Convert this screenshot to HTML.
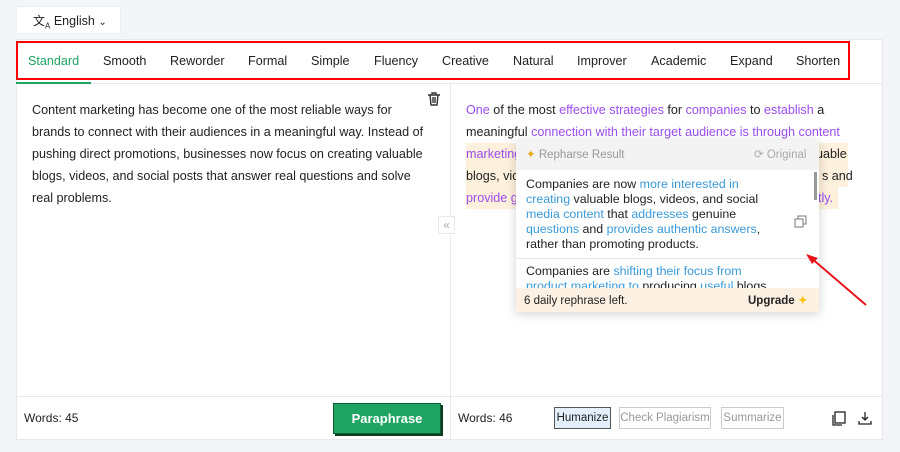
<!DOCTYPE html>
<html><head><meta charset="utf-8"><style>
*{box-sizing:border-box;margin:0;padding:0}
body{width:900px;height:452px;background:#f3f5f9;font-family:"Liberation Sans",Arial,sans-serif;position:relative;overflow:hidden;color:#222}
.abs{position:absolute}
.lang{left:16px;top:6px;width:105px;height:28px;background:#fff;font-size:12.5px;line-height:28px;padding-left:16px;border:1px solid #eceef2}
.main{left:16px;top:39px;width:867px;height:401px;background:#fff;border:1px solid #e6e8ec}
.tabs{left:16px;top:41px;width:834px;height:39px;border:2px solid #f00}
.tab{position:absolute;top:54px;font-size:12.6px;color:#222}
.ln{position:absolute;font-size:12.6px;line-height:22px;white-space:nowrap}
.p{color:#9b4dee}
.b{color:#3a9ad9}
.hl{background:#fdf0dc}
.pop{left:516px;top:140px;width:303px;height:172px;background:#fff;box-shadow:0 2px 10px rgba(0,0,0,.18);overflow:hidden}
.pl{position:absolute;left:10px;font-size:12.4px;line-height:15px;white-space:nowrap;color:#222}
.btn{position:absolute;top:407px;height:22px;font-size:11.5px;line-height:21px;padding:0;border:1px solid #ccc;color:#999;white-space:nowrap;text-align:center;overflow:hidden}
</style></head><body>
<div class="abs lang"><span style="font-size:12px">文<sub style="font-size:8px">A</sub></span> English <span style="font-size:10px">⌄</span></div>
<div class="abs main"></div>
<div class="abs" style="left:16px;top:83px;width:867px;height:1px;background:#e6e8ec"></div>
<div class="abs" style="left:16px;top:82px;width:75px;height:2px;background:#1fa463"></div>
<div class="abs tabs"></div>
<span class="tab" style="left:28px;color:#1fa463">Standard</span>
<span class="tab" style="left:103px">Smooth</span>
<span class="tab" style="left:170px">Reworder</span>
<span class="tab" style="left:248px">Formal</span>
<span class="tab" style="left:311px">Simple</span>
<span class="tab" style="left:374px">Fluency</span>
<span class="tab" style="left:442px">Creative</span>
<span class="tab" style="left:513px">Natural</span>
<span class="tab" style="left:577px">Improver</span>
<span class="tab" style="left:651px">Academic</span>
<span class="tab" style="left:730px">Expand</span>
<span class="tab" style="left:796px">Shorten</span>
<div class="abs" style="left:450px;top:84px;width:1px;height:356px;background:#e6e8ec"></div>
<div class="abs" style="left:438px;top:216px;width:17px;height:18px;background:#fff;border:1px solid #e6e8ec;color:#aaa;font-size:12px;text-align:center;line-height:16px">«</div>
<div class="abs" style="left:16px;top:396px;width:867px;height:1px;background:#e6e8ec"></div>
<svg class="abs" style="left:427px;top:92px" width="14" height="14" viewBox="0 0 14 14" fill="none" stroke="#333" stroke-width="1.4"><path d="M1 3h12M5 3V1h4v2M3 3l1 10h6l1-10M6 5v6M8 5v6"/></svg>
<div class="ln" style="left:32px;top:99px">Content marketing has become one of the most reliable ways for</div>
<div class="ln" style="left:32px;top:121px">brands to connect with their audiences in a meaningful way. Instead of</div>
<div class="ln" style="left:32px;top:143px">pushing direct promotions, businesses now focus on creating valuable</div>
<div class="ln" style="left:32px;top:165px">blogs, videos, and social posts that answer real questions and solve</div>
<div class="ln" style="left:32px;top:187px">real problems.</div>
<div class="ln" style="left:466px;top:99px"><span class="p">One</span> of the most <span class="p">effective strategies</span> for <span class="p">companies</span> to <span class="p">establish</span> a</div>
<div class="ln" style="left:466px;top:121px">meaningful <span class="p">connection with their target audience is through content</span></div>
<div class="ln hl" style="left:466px;top:143px;width:382px"><span class="p">marketing</span></div>
<div class="ln" style="left:816px;top:143px">uable</div>
<div class="ln hl" style="left:466px;top:165px;width:382px">blogs, videos</div>
<div class="ln" style="left:822px;top:165px">s and</div>
<div class="ln hl" style="left:466px;top:187px;width:372px"><span class="p">provide g</span></div>
<div class="ln p" style="left:818px;top:187px">tly.</div>
<div class="abs pop">
<div class="abs" style="left:0;top:0;width:303px;height:30px;background:#f3f3f3"></div>
<div class="pl" style="top:8px;color:#999;font-size:11.5px"><span style="color:#e6a817">✦</span> Repharse Result</div>
<div class="pl" style="top:8px;left:238px;color:#aaa;font-size:11.5px">⟳ Original</div>
<div class="abs" style="left:298px;top:32px;width:3px;height:28px;background:#999"></div>
<div class="pl" style="top:37px">Companies are now <span class="b">more interested in</span></div>
<div class="pl" style="top:52px"><span class="b">creating</span> valuable blogs, videos, and social</div>
<div class="pl" style="top:67px"><span class="b">media content</span> that <span class="b">addresses</span> genuine</div>
<div class="pl" style="top:82px"><span class="b">questions</span> and <span class="b">provides authentic answers</span>,</div>
<div class="pl" style="top:97px">rather than promoting products.</div>
<svg class="abs" style="left:278px;top:75px" width="13" height="13" viewBox="0 0 13 13" fill="none" stroke="#777" stroke-width="1"><rect x="1" y="4" width="8" height="8"/><path d="M4 4V1h8v8H9"/></svg>
<div class="abs" style="left:0;top:118px;width:303px;height:1px;background:#e6e6e6"></div>
<div class="pl" style="top:124px">Companies are <span class="b">shifting their focus from</span></div>
<div class="pl" style="top:139px"><span class="b">product marketing to</span> producing <span class="b">useful</span> blogs</div>
<div class="abs" style="left:0;top:148px;width:303px;height:24px;background:#fdf1e4"></div>
<div class="pl" style="top:154px;left:8px;font-size:11.5px">6 daily rephrase left.</div>
<div class="pl" style="top:154px;left:232px;font-size:11.5px;font-weight:bold">Upgrade <span style="color:#f5c518">✦</span></div>
</div>
<svg class="abs" style="left:0;top:0" width="900" height="452"><path d="M866 305L810 257" stroke="#e8141b" stroke-width="2"/><path d="M806 254l12 4-6 6z" fill="#e8141b"/></svg>
<div class="abs" style="left:24px;top:411px;font-size:12px">Words: 45</div>
<div class="abs" style="left:333px;top:403px;width:108px;height:31px;background:#1fa463;border:1px solid #0d5b33;box-shadow:2px 2px 0 #0d3b20;color:#fff;font-weight:bold;font-size:13px;text-align:center;line-height:29px">Paraphrase</div>
<div class="abs" style="left:458px;top:411px;font-size:12px">Words: 46</div>
<div class="btn" style="left:554px;width:57px;color:#222;background:#e3effb;border-color:#555">Humanize</div>
<div class="btn" style="left:619px;width:92px">Check Plagiarism</div>
<div class="btn" style="left:721px;width:63px">Summarize</div>
<svg class="abs" style="left:832px;top:411px" width="14" height="15" viewBox="0 0 14 15" fill="none" stroke="#222" stroke-width="1.3"><rect x="3" y="1" width="10" height="11"/><path d="M1 4v10h9"/></svg>
<svg class="abs" style="left:858px;top:411px" width="14" height="14" viewBox="0 0 14 14" fill="none" stroke="#222" stroke-width="1.3"><path d="M7 1v8M4 6l3 3 3-3M1 10v3h12v-3"/></svg>
</body></html>
